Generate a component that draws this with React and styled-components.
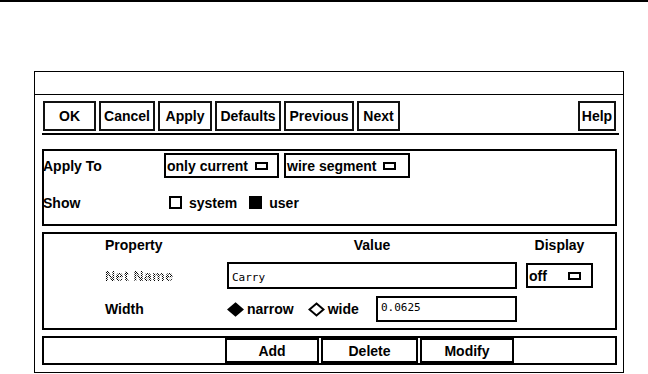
import styled, { createGlobalStyle } from "styled-components"

const GlobalStyle = createGlobalStyle`
    body {
        margin: 0;
        background: #fff;
        font-family: "Liberation Sans", Arial, sans-serif;
        font-weight: 700;
        font-size: 14px;
        color: #000;
    }
`

const toolButtons = [
    { label: "OK", w: 53 },
    { label: "Cancel", w: 56 },
    { label: "Apply", w: 54 },
    { label: "Defaults", w: 66 },
    { label: "Previous", w: 70 },
    { label: "Next", w: 43 },
]

function Diamond({ filled }) {
    return (
        <svg width="17" height="15" viewBox="0 0 17 15">
            <polygon
                points="8.5,1.5 15.5,7.5 8.5,13.5 1.5,7.5"
                fill={filled ? "#000" : "#fff"}
                stroke="#000"
                strokeWidth="2"
            />
        </svg>
    )
}

export default function App() {
    return (
        <>
            <GlobalStyle />
            <TopRule />
            <Window>
                <TitleBar />
                <Toolbar>
                    {toolButtons.map((b) => (
                        <ToolButton key={b.label} $w={b.w}>{b.label}</ToolButton>
                    ))}
                    <ToolButton $w={38} $push>Help</ToolButton>
                </Toolbar>

                <Sections>
                    <ApplyBox>
                        <FormRow>
                            <RowLabel>Apply To</RowLabel>
                            <OptionMenu $w={115}>
                                only current<Indicator />
                            </OptionMenu>
                            <OptionMenu $w={126}>
                                wire segment<Indicator />
                            </OptionMenu>
                        </FormRow>
                        <FormRow>
                            <RowLabel>Show</RowLabel>
                            <CheckItem>
                                <CheckBox />
                                system
                            </CheckItem>
                            <CheckItem>
                                <CheckBox $on />
                                user
                            </CheckItem>
                        </FormRow>
                    </ApplyBox>

                    <PropBox>
                        <HeadCell>Property</HeadCell>
                        <HeadCell $center $w={290}>Value</HeadCell>
                        <HeadCell $center $w={67}>Display</HeadCell>

                        <Disabled>Net Name</Disabled>
                        <TextField $w={290} $h={27} $top={7}>Carry</TextField>
                        <OptionMenu $w={67} $h={25}>
                            off<Indicator $gap={21} />
                        </OptionMenu>

                        <PropLabel>Width</PropLabel>
                        <RadioRow>
                            <Radio>
                                <Diamond filled />
                                narrow
                            </Radio>
                            <Radio>
                                <Diamond />
                                wide
                            </Radio>
                            <TextField $w={141} $h={26} $top={3} $push>0.0625</TextField>
                        </RadioRow>
                        <span />
                    </PropBox>

                    <ActionBox>
                        <ActionButton $w={94}>Add</ActionButton>
                        <ActionButton $w={97}>Delete</ActionButton>
                        <ActionButton $w={94}>Modify</ActionButton>
                    </ActionBox>
                </Sections>
            </Window>
        </>
    )
}

const TopRule = styled.div`
    height: 2px;
    background: #000;
`

const Window = styled.div`
    box-sizing: border-box;
    margin: 69px 0 0 34px;
    width: 590px;
    height: 302px;
    border: 1px solid #000;
`

const TitleBar = styled.div`
    height: 22px;
    border-bottom: 1px solid #000;
`

const Toolbar = styled.div`
    display: flex;
    gap: 3px;
    margin: 0 4px 0 7px;
    padding: 6px 3px 2px 1px;
    border-bottom: 2px solid #000;
`

const ToolButton = styled.div`
    box-sizing: border-box;
    width: ${(p) => p.$w}px;
    height: 30px;
    border: 2px solid #111;
    display: flex;
    align-items: center;
    justify-content: center;
    margin-left: ${(p) => (p.$push ? "auto" : "0")};
`

const Sections = styled.div`
    display: flex;
    flex-direction: column;
    gap: 6px;
    width: 575px;
    margin: 14px 0 0 7px;
`

const Box = styled.div`
    box-sizing: border-box;
    border: 2px solid #000;
`

const ApplyBox = styled(Box)`
    height: 77px;
    padding-top: 2px;
    display: flex;
    flex-direction: column;
    gap: 12px;
`

const FormRow = styled.div`
    display: flex;
    align-items: center;
    height: 25px;
`

const RowLabel = styled.div`
    width: 121px;
    margin-left: -1px;
`

const OptionMenu = styled.div`
    box-sizing: border-box;
    width: ${(p) => p.$w}px;
    height: ${(p) => p.$h || 25}px;
    border: 2px solid #000;
    padding-left: 1px;
    margin-right: 5px;
    display: flex;
    align-items: center;
    white-space: nowrap;
`

const Indicator = styled.span`
    display: inline-block;
    box-sizing: border-box;
    width: 13px;
    height: 8px;
    border: 2px solid #000;
    margin-left: ${(p) => p.$gap || 7}px;
`

const CheckItem = styled.div`
    display: flex;
    align-items: center;
    gap: 7px;
    margin-left: 5px;
    margin-right: 7px;
`

const CheckBox = styled.span`
    box-sizing: border-box;
    width: 13px;
    height: 13px;
    border: 2px solid #000;
    background: ${(p) => (p.$on ? "#000" : "#fff")};
`

const PropBox = styled(Box)`
    height: 98px;
    display: grid;
    grid-template-columns: 122px 299px 1fr;
    grid-template-rows: 20px 27px 26px;
    row-gap: 7px;
    align-items: center;
    padding: 1px 0 0 61px;
`

const HeadCell = styled.div`
    width: ${(p) => (p.$w ? `${p.$w}px` : "auto")};
    text-align: ${(p) => (p.$center ? "center" : "left")};
`

const PropLabel = styled.div``

const Disabled = styled.div`
    background: repeating-conic-gradient(#000 0 25%, #fff 0 50%) 0 0 / 2px 2px;
    -webkit-background-clip: text;
    background-clip: text;
    color: transparent;
    letter-spacing: 0.5px;
`

const TextField = styled.div`
    box-sizing: border-box;
    width: ${(p) => p.$w}px;
    height: ${(p) => p.$h}px;
    border: 2px solid #000;
    padding: ${(p) => p.$top}px 0 0 3px;
    margin-left: ${(p) => (p.$push ? "auto" : "0")};
    font-family: "DejaVu Sans Mono", "Liberation Mono", monospace;
    font-weight: 400;
    font-size: 11px;
`

const RadioRow = styled.div`
    display: flex;
    align-items: center;
    width: 290px;
`

const Radio = styled.div`
    display: flex;
    align-items: center;
    gap: 3px;
    margin-right: 14px;
`

const ActionBox = styled(Box)`
    height: 29px;
    display: flex;
    gap: 2px;
    padding-left: 181px;
`

const ActionButton = styled.div`
    box-sizing: border-box;
    width: ${(p) => p.$w}px;
    height: 25px;
    border: 2px solid #000;
    display: flex;
    align-items: center;
    justify-content: center;
`
